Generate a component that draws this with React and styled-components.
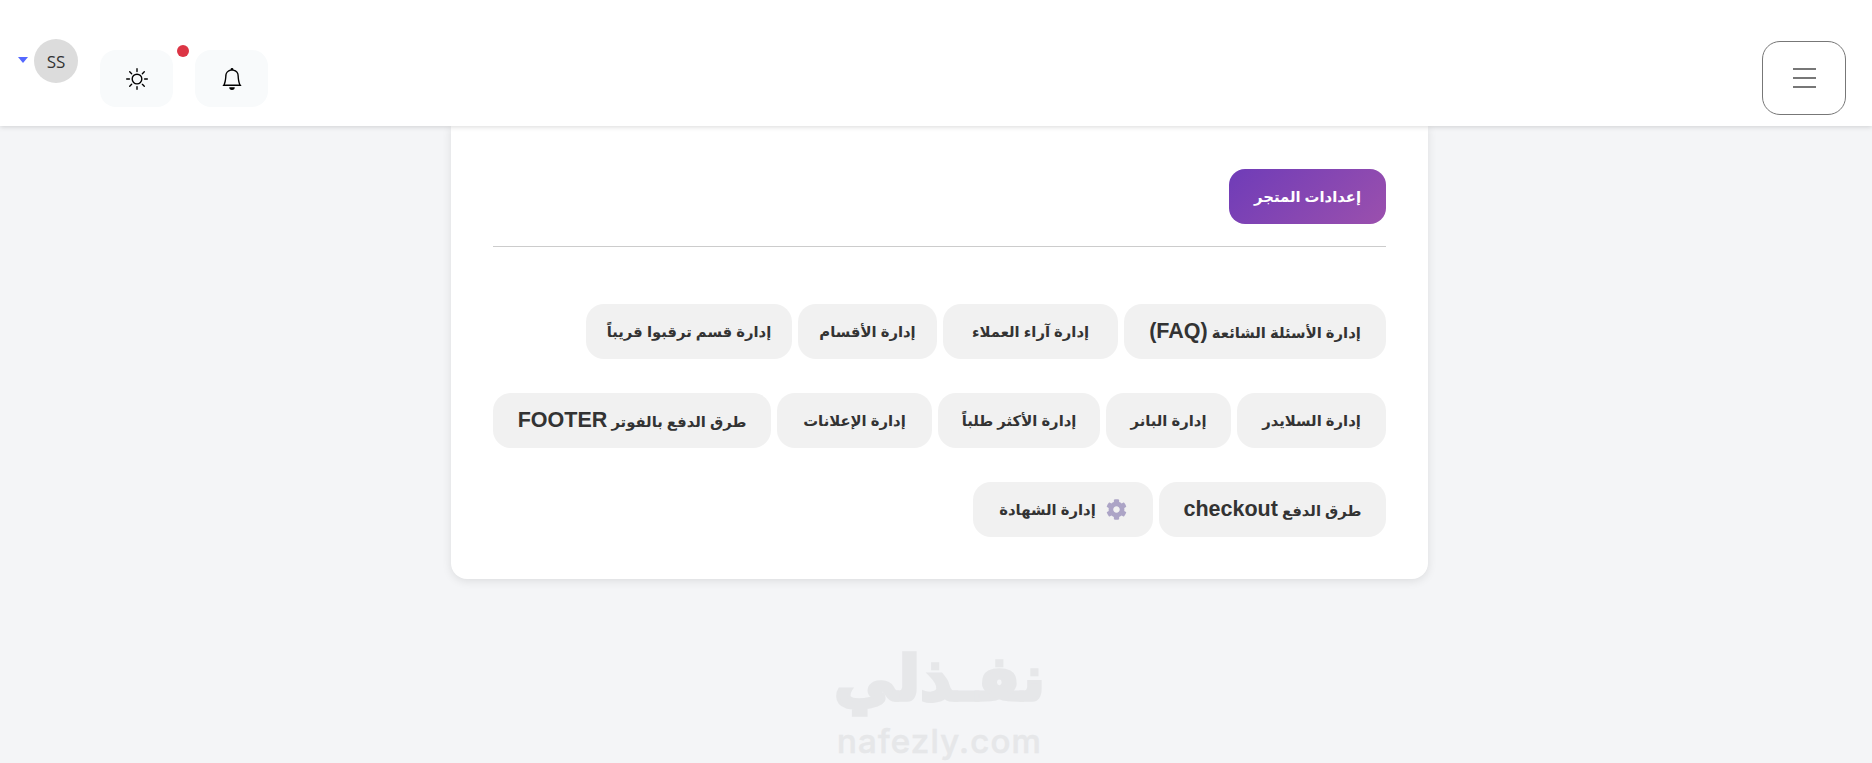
import React from 'react';
import styled, { createGlobalStyle } from 'styled-components';
import { BsBell, BsSun } from 'react-icons/bs';
import { FaCog } from 'react-icons/fa';

const GlobalStyle = createGlobalStyle`
    html, body {
        margin: 0;
        padding: 0;
        background: #f4f5f7;
        font-family: "Liberation Sans", "DejaVu Sans", sans-serif;
    }
`;

const Page = styled.div`
    height: 763px;
    overflow: hidden;
    background: #f4f5f7;
`;

const Header = styled.header`
    position: relative;
    z-index: 2;
    height: 126px;
    box-sizing: border-box;
    padding: 0 26px 0 18px;
    display: flex;
    justify-content: space-between;
    align-items: flex-start;
    background: #fff;
    box-shadow: 0 1px 5px rgba(0, 0, 0, 0.15);
`;

const LeftGroup = styled.div`
    display: flex;
    align-items: flex-start;
`;

const UserMenu = styled.div`
    display: flex;
    align-items: center;
    gap: 6px;
    margin-top: 39px;
`;

const Caret = styled.span`
    width: 0;
    height: 0;
    border-left: 5.5px solid transparent;
    border-right: 5.5px solid transparent;
    border-top: 6px solid #5468ff;
    margin-top: -3px;
`;

const Avatar = styled.div`
    width: 44px;
    height: 44px;
    border-radius: 50%;
    background: #dcdcdc;
    color: #333;
    font-family: "Open Sans", sans-serif;
    font-size: 17px;
    display: flex;
    align-items: center;
    justify-content: center;
`;

const IconBox = styled.button`
    position: relative;
    width: 73px;
    height: 57px;
    margin-top: 50px;
    margin-left: ${(p) => p.$gap}px;
    padding: 0;
    border: 0;
    border-radius: 16px;
    background: #f8fafb;
    color: #000;
    display: flex;
    align-items: center;
    justify-content: center;
    font-size: 22px;
`;

const Dot = styled.span`
    position: absolute;
    top: -5px;
    left: -18px;
    width: 12px;
    height: 12px;
    border-radius: 50%;
    background: #dc3545;
`;

const MenuButton = styled.button`
    width: 84px;
    height: 74px;
    margin-top: 41px;
    padding: 0;
    box-sizing: border-box;
    border: 1px solid #777;
    border-radius: 18px;
    background: #fff;
    display: flex;
    flex-direction: column;
    align-items: center;
    justify-content: center;
    gap: 7px;
`;

const MenuLine = styled.span`
    width: 23px;
    height: 2px;
    background: #777;
`;

const Main = styled.main`
    display: flex;
    flex-direction: column;
    align-items: center;
    padding-left: 7px;
`;

const Card = styled.section`
    width: 977px;
    box-sizing: border-box;
    padding: 43px 42px 42px;
    background: #fff;
    border-radius: 0 0 16px 16px;
    box-shadow: 0 2px 10px rgba(0, 0, 0, 0.1);
    direction: rtl;
`;

const Title = styled.div`
    display: inline-flex;
    align-items: center;
    justify-content: center;
    width: 157px;
    height: 55px;
    border-radius: 16px;
    background: linear-gradient(135deg, #6f3cb8, #9b50ad);
    color: #fff;
    font-size: 14.8px;
    font-weight: 700;
`;

const Divider = styled.hr`
    margin: 22px 0 57px;
    border: 0;
    border-top: 1px solid #ccc;
`;

const Links = styled.div`
    display: flex;
    flex-direction: column;
    gap: 34px;
`;

const LinkRow = styled.div`
    display: flex;
    gap: 6px;
`;

const Chip = styled.a`
    display: inline-flex;
    align-items: center;
    justify-content: center;
    gap: 10px;
    width: ${(p) => p.$width}px;
    height: 55px;
    border-radius: 18px;
    background: #f1f1f1;
    color: #333;
    font-size: 14.8px;
    font-weight: 700;
    white-space: nowrap;
`;

const Latin = styled.span`
    font-size: 21.5px;
`;

const GearIcon = styled(FaCog)`
    color: #aca4c6;
    font-size: 21px;
`;

const Brand = styled.div`
    margin-top: 64px;
    display: flex;
    flex-direction: column;
    align-items: center;
    color: #e6e7e9;
    user-select: none;
`;

const BrandArabic = styled.div`
    font-family: "DejaVu Sans", sans-serif;
    font-size: 62px;
    font-weight: 700;
    line-height: 72px;
    -webkit-text-stroke: 3.5px #e6e7e9;
`;

const BrandLatin = styled.div`
    margin-top: 6px;
    font-family: Inter, sans-serif;
    font-size: 33px;
    font-weight: 500;
    letter-spacing: 1.2px;
    line-height: 40px;
    -webkit-text-stroke: 0.5px #e6e7e9;
`;

const rows = [
    [
        { label: 'إدارة الأسئلة الشائعة ', latin: '(FAQ)', width: 262 },
        { label: 'إدارة آراء العملاء', width: 175 },
        { label: 'إدارة الأقسام', width: 139 },
        { label: 'إدارة قسم ترقبوا قريباً', width: 206 },
    ],
    [
        { label: 'إدارة السلايدر', width: 149 },
        { label: 'إدارة البانر', width: 125 },
        { label: 'إدارة الأكثر طلباً', width: 162 },
        { label: 'إدارة الإعلانات', width: 155 },
        { label: 'طرق الدفع بالفوتر ', latin: 'FOOTER', width: 278 },
    ],
];

function App() {
    return (
        <Page>
            <GlobalStyle />
            <Header>
                <LeftGroup>
                    <UserMenu>
                        <Caret />
                        <Avatar>SS</Avatar>
                    </UserMenu>
                    <IconBox $gap={22}>
                        <BsSun />
                    </IconBox>
                    <IconBox $gap={22}>
                        <Dot />
                        <BsBell />
                    </IconBox>
                </LeftGroup>
                <MenuButton>
                    <MenuLine />
                    <MenuLine />
                    <MenuLine />
                </MenuButton>
            </Header>
            <Main>
                <Card>
                    <Title>إعدادات المتجر</Title>
                    <Divider />
                    <Links>
                        {rows.map((row, i) => (
                            <LinkRow key={i}>
                                {row.map(({ label, latin, width }) => (
                                    <Chip key={label} $width={width}>
                                        <span>
                                            {label}
                                            {latin && <Latin>{latin}</Latin>}
                                        </span>
                                    </Chip>
                                ))}
                            </LinkRow>
                        ))}
                        <LinkRow>
                            <Chip $width={227}>
                                <span>
                                    طرق الدفع <Latin>checkout</Latin>
                                </span>
                            </Chip>
                            <Chip $width={180}>
                                <GearIcon />
                                <span>إدارة الشهادة</span>
                            </Chip>
                        </LinkRow>
                    </Links>
                </Card>
                <Brand>
                    <BrandArabic>نفـذلي</BrandArabic>
                    <BrandLatin>nafezly.com</BrandLatin>
                </Brand>
            </Main>
        </Page>
    );
}

export default App;
